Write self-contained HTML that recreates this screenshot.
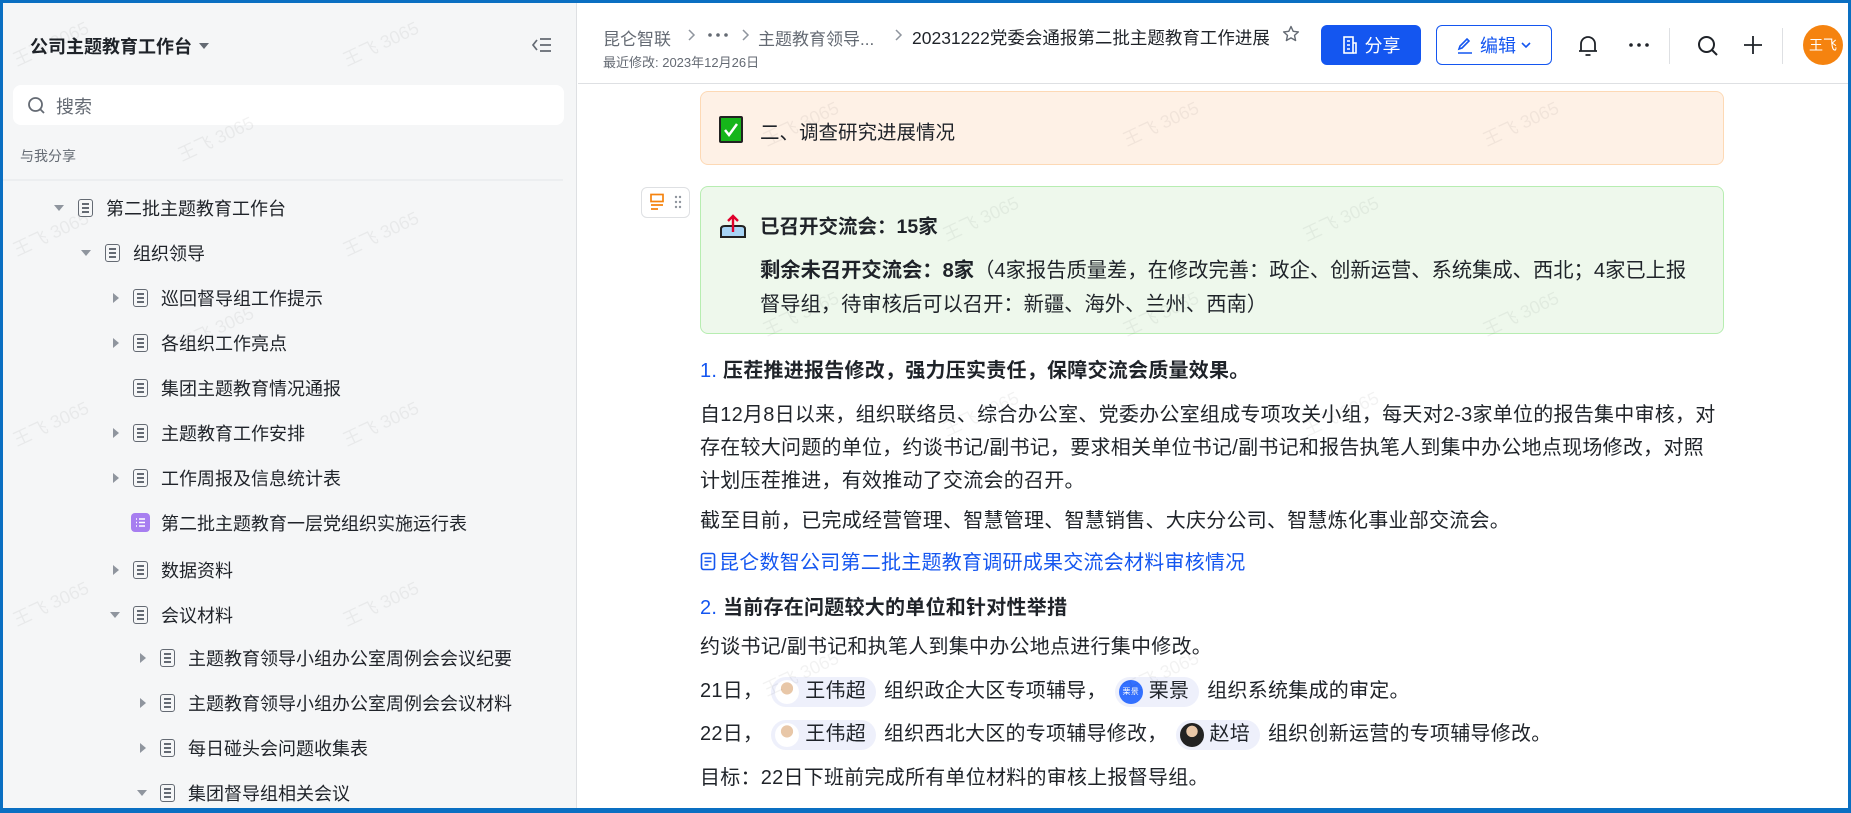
<!DOCTYPE html>
<html><head><meta charset="utf-8"><style>
*{margin:0;padding:0;box-sizing:border-box}
body{width:1851px;height:813px;overflow:hidden;background:#fff;font-family:"Liberation Sans","Noto Sans CJK SC",sans-serif;color:#1f2329;position:relative}
.frame{position:absolute;inset:0;border:3px solid #0a6fc2;border-bottom-width:5px;z-index:50;pointer-events:none}
.side{position:absolute;left:0;top:0;width:577px;height:813px;background:#f5f6f7;border-right:1px solid #dee0e3;overflow:hidden}
.abs{position:absolute;white-space:nowrap}
.ti{position:absolute;height:30px;display:flex;align-items:center;font-size:18px;color:#1f2329;white-space:nowrap}
.arr{position:absolute;width:0;height:0}
.down{border-left:5px solid transparent;border-right:5px solid transparent;border-top:6px solid #8f959e}
.right{border-top:5px solid transparent;border-bottom:5px solid transparent;border-left:6px solid #8f959e}
.doc{position:absolute;width:15px;height:18px;border:1.8px solid #646a73;border-radius:3px}
.doc:before{content:"";position:absolute;left:2.5px;top:3px;width:7px;height:1.6px;background:#646a73;box-shadow:0 4px 0 #646a73,0 8px 0 #646a73}
.p{position:absolute;left:700px;font-size:20px;white-space:nowrap;line-height:33px;letter-spacing:0.25px}
.men{display:inline-flex;align-items:center;background:#eef0fb;border-radius:16px;padding:0 10px 0 4px;height:30px;vertical-align:middle;margin:0 8px;color:#1f2329}
.av{width:24px;height:24px;border-radius:50%;margin-right:6px;display:inline-block}
.wm{position:absolute;color:rgba(0,0,0,0.05);font-size:18px;transform:rotate(-25deg);white-space:nowrap}
</style></head><body>
<div class="frame"></div>

<div class="side">
  <div class="abs" style="left:30px;top:33px;font-size:18px;font-weight:bold">公司主题教育工作台</div>
  <div class="arr down" style="left:199px;top:43px;border-top-color:#646a73"></div>
  <svg class="abs" style="left:531px;top:36px" width="22" height="18" viewBox="0 0 22 18"><path d="M6 4 L2 9 L6 14 M9 3 H20 M9 9 H20 M9 15 H20" stroke="#646a73" stroke-width="1.7" fill="none"/></svg>
  <div class="abs" style="left:13px;top:85px;width:551px;height:40px;background:#fff;border-radius:8px"></div>
  <svg class="abs" style="left:27px;top:96px" width="20" height="20" viewBox="0 0 20 20"><circle cx="8.5" cy="8.5" r="6.5" stroke="#646a73" stroke-width="1.8" fill="none"/><path d="M13.5 13.5 L17 17" stroke="#646a73" stroke-width="1.8"/></svg>
  <div class="abs" style="left:56px;top:93px;font-size:18px;color:#646a73">搜索</div>
  <div class="abs" style="left:20px;top:146px;font-size:14px;color:#646a73">与我分享</div>
  <div class="abs" style="left:3px;top:179px;width:560px;height:2px;background:#eceef0"></div>

  <div class="arr down" style="left:54px;top:205px"></div><div class="doc" style="left:78px;top:199px"></div><div class="ti" style="left:106px;top:193px">第二批主题教育工作台</div>
  <div class="arr down" style="left:81px;top:250px"></div><div class="doc" style="left:105px;top:244px"></div><div class="ti" style="left:133px;top:238px">组织领导</div>
  <div class="arr right" style="left:113px;top:293px"></div><div class="doc" style="left:133px;top:289px"></div><div class="ti" style="left:161px;top:283px">巡回督导组工作提示</div>
  <div class="arr right" style="left:113px;top:338px"></div><div class="doc" style="left:133px;top:334px"></div><div class="ti" style="left:161px;top:328px">各组织工作亮点</div>
  <div class="doc" style="left:133px;top:379px"></div><div class="ti" style="left:161px;top:373px">集团主题教育情况通报</div>
  <div class="arr right" style="left:113px;top:428px"></div><div class="doc" style="left:133px;top:424px"></div><div class="ti" style="left:161px;top:418px">主题教育工作安排</div>
  <div class="arr right" style="left:113px;top:473px"></div><div class="doc" style="left:133px;top:469px"></div><div class="ti" style="left:161px;top:463px">工作周报及信息统计表</div>
  <div class="abs" style="left:131px;top:513px;width:19px;height:19px;background:#a77ef0;border-radius:4px"><svg width="19" height="19" viewBox="0 0 19 19"><path d="M5 6h1M8 6h6M5 9.5h1M8 9.5h6M5 13h1M8 13h6" stroke="#fff" stroke-width="1.5"/></svg></div><div class="ti" style="left:161px;top:508px">第二批主题教育一层党组织实施运行表</div>
  <div class="arr right" style="left:113px;top:565px"></div><div class="doc" style="left:133px;top:561px"></div><div class="ti" style="left:161px;top:555px">数据资料</div>
  <div class="arr down" style="left:110px;top:612px"></div><div class="doc" style="left:133px;top:606px"></div><div class="ti" style="left:161px;top:600px">会议材料</div>
  <div class="arr right" style="left:140px;top:653px"></div><div class="doc" style="left:160px;top:649px"></div><div class="ti" style="left:188px;top:643px">主题教育领导小组办公室周例会会议纪要</div>
  <div class="arr right" style="left:140px;top:698px"></div><div class="doc" style="left:160px;top:694px"></div><div class="ti" style="left:188px;top:688px">主题教育领导小组办公室周例会会议材料</div>
  <div class="arr right" style="left:140px;top:743px"></div><div class="doc" style="left:160px;top:739px"></div><div class="ti" style="left:188px;top:733px">每日碰头会问题收集表</div>
  <div class="arr down" style="left:137px;top:790px"></div><div class="doc" style="left:160px;top:784px"></div><div class="ti" style="left:188px;top:778px">集团督导组相关会议</div>
  <div class="wm" style="left:10px;top:30px">王飞 3065</div><div class="wm" style="left:340px;top:30px">王飞 3065</div>
  <div class="wm" style="left:175px;top:125px">王飞 3065</div><div class="wm" style="left:10px;top:220px">王飞 3065</div>
  <div class="wm" style="left:340px;top:220px">王飞 3065</div><div class="wm" style="left:175px;top:315px">王飞 3065</div>
  <div class="wm" style="left:10px;top:410px">王飞 3065</div><div class="wm" style="left:340px;top:410px">王飞 3065</div>
  <div class="wm" style="left:10px;top:590px">王飞 3065</div><div class="wm" style="left:340px;top:590px">王飞 3065</div>
</div>

<!-- header -->
<div class="abs" style="left:603px;top:25px;font-size:17px;color:#646a73">昆仑智联</div>
<svg class="abs" style="left:686px;top:28px" width="10" height="14" viewBox="0 0 10 14"><path d="M3 2l5 5-5 5" stroke="#8f959e" stroke-width="1.5" fill="none"/></svg>
<svg class="abs" style="left:707px;top:32px" width="22" height="6" viewBox="0 0 22 6"><g fill="#646a73"><circle cx="3" cy="3" r="1.8"/><circle cx="11" cy="3" r="1.8"/><circle cx="19" cy="3" r="1.8"/></g></svg>
<svg class="abs" style="left:740px;top:28px" width="10" height="14" viewBox="0 0 10 14"><path d="M3 2l5 5-5 5" stroke="#8f959e" stroke-width="1.5" fill="none"/></svg>
<div class="abs" style="left:758px;top:25px;font-size:17px;color:#646a73">主题教育领导...</div>
<svg class="abs" style="left:893px;top:28px" width="10" height="14" viewBox="0 0 10 14"><path d="M3 2l5 5-5 5" stroke="#8f959e" stroke-width="1.5" fill="none"/></svg>
<div class="abs" style="left:912px;top:25px;font-size:17.5px;color:#1f2329">20231222党委会通报第二批主题教育工作进展</div>
<svg class="abs" style="left:1282px;top:25px" width="18" height="18" viewBox="0 0 18 18"><path d="M9 1.5l2.2 4.8 5.2.6-3.9 3.5 1.1 5.1L9 12.9l-4.6 2.6 1.1-5.1L1.6 6.9l5.2-.6z" stroke="#646a73" stroke-width="1.4" fill="none" stroke-linejoin="round"/></svg>
<div class="abs" style="left:603px;top:52px;font-size:13px;color:#646a73">最近修改: 2023年12月26日</div>
<div class="abs" style="left:1321px;top:25px;width:100px;height:40px;background:#1456f0;border-radius:6px;color:#fff;font-size:18px;display:flex;align-items:center;justify-content:center"><svg width="16" height="18" viewBox="0 0 16 18" style="margin-right:7px"><rect x="2" y="1" width="9" height="16" stroke="#fff" stroke-width="1.6" fill="none"/><path d="M11 7h3v10h-3M5 5h3M5 9h3M5 13h3" stroke="#fff" stroke-width="1.6" fill="none"/></svg>分享</div>
<div class="abs" style="left:1436px;top:25px;width:116px;height:40px;border:1.3px solid #1456f0;border-radius:6px;color:#1456f0;font-size:18px;display:flex;align-items:center;justify-content:center"><svg width="18" height="18" viewBox="0 0 18 18" style="margin-right:6px"><path d="M3 13l1-3 7-7 2 2-7 7z M2 17h14" stroke="#1456f0" stroke-width="1.6" fill="none"/></svg>编辑<svg width="12" height="10" viewBox="0 0 12 10" style="margin-left:4px"><path d="M2 3l4 4 4-4" stroke="#1456f0" stroke-width="1.6" fill="none"/></svg></div>
<svg class="abs" style="left:1577px;top:34px" width="22" height="24" viewBox="0 0 22 24"><path d="M4 17V10a7 7 0 0 1 14 0v7H4zM2 17h18M8.5 21h5" stroke="#1f2329" stroke-width="1.8" fill="none"/></svg>
<svg class="abs" style="left:1628px;top:42px" width="22" height="6" viewBox="0 0 22 6"><g fill="#1f2329"><circle cx="3" cy="3" r="1.8"/><circle cx="11" cy="3" r="1.8"/><circle cx="19" cy="3" r="1.8"/></g></svg>
<div class="abs" style="left:1669px;top:28px;width:1px;height:36px;background:#dee0e3"></div>
<svg class="abs" style="left:1696px;top:34px" width="24" height="24" viewBox="0 0 24 24"><circle cx="10.5" cy="10.5" r="7.5" stroke="#1f2329" stroke-width="2" fill="none"/><path d="M16 16l5 5" stroke="#1f2329" stroke-width="2"/></svg>
<svg class="abs" style="left:1743px;top:35px" width="20" height="20" viewBox="0 0 20 20"><path d="M10 1v18M1 10h18" stroke="#1f2329" stroke-width="1.8"/></svg>
<div class="abs" style="left:1782px;top:28px;width:1px;height:36px;background:#dee0e3"></div>
<div class="abs" style="left:1803px;top:25px;width:40px;height:40px;border-radius:50%;background:#f5830f;color:#fff;font-size:14px;display:flex;align-items:center;justify-content:center">王飞</div>
<div class="abs" style="left:578px;top:83px;width:1270px;height:1px;background:#dee0e3"></div>

<!-- content -->
<div class="abs" style="left:700px;top:91px;width:1024px;height:74px;background:#fef1e6;border:1.5px solid #fdd9b5;border-radius:8px"></div>
<div class="abs" style="left:719px;top:116px;width:24px;height:27px;background:#16b51a;border:2px solid #222;border-radius:2px"><svg width="20" height="23" viewBox="0 0 20 23"><path d="M4 12l4 5 8-11" stroke="#fff" stroke-width="2.5" fill="none"/></svg></div>
<div class="abs" style="left:760px;top:116px;font-size:19.5px">二、调查研究进展情况</div>

<div class="abs" style="left:641px;top:187px;width:49px;height:31px;border:1px solid #dee0e3;border-radius:6px;background:#fff"></div>
<svg class="abs" style="left:649px;top:193px" width="16" height="18" viewBox="0 0 16 18"><rect x="2" y="1.5" width="12" height="7" stroke="#f5830f" stroke-width="1.7" fill="none"/><path d="M2 12h12M2 16h7" stroke="#f5830f" stroke-width="1.7"/></svg>
<svg class="abs" style="left:674px;top:195px" width="8" height="16" viewBox="0 0 8 16"><g fill="#8f959e"><circle cx="2" cy="2" r="1.2"/><circle cx="6" cy="2" r="1.2"/><circle cx="2" cy="7" r="1.2"/><circle cx="6" cy="7" r="1.2"/><circle cx="2" cy="12" r="1.2"/><circle cx="6" cy="12" r="1.2"/></g></svg>
<div class="abs" style="left:700px;top:186px;width:1024px;height:148px;background:#eef8ec;border:1.5px solid #b7edb1;border-radius:8px"></div>
<svg class="abs" style="left:719px;top:212px" width="28" height="28" viewBox="0 0 28 28"><path d="M2 17 Q2 14 6 14 H22 Q26 14 26 17 V25 H2z" fill="#a8d4f5" stroke="#222" stroke-width="2"/><path d="M14 20V4M9 9l5-5 5 5" stroke="#e0002b" stroke-width="2.4" fill="none"/></svg>
<div class="abs" style="left:760px;top:210px;font-size:19.5px;font-weight:bold">已召开交流会：15家</div>
<div class="abs" style="left:760px;top:253px;font-size:20.3px"><b>剩余未召开交流会：8家</b>（4家报告质量差，在修改完善：政企、创新运营、系统集成、西北；4家已上报</div>
<div class="abs" style="left:760px;top:287px;font-size:20.3px">督导组，待审核后可以召开：新疆、海外、兰州、西南）</div>

<div class="p" style="top:355px;font-weight:bold"><span style="color:#1456f0;font-weight:normal">1.</span> 压茬推进报告修改，强力压实责任，保障交流会质量效果。</div>
<div class="p" style="top:399px">自12月8日以来，组织联络员、综合办公室、党委办公室组成专项攻关小组，每天对2-3家单位的报告集中审核，对</div>
<div class="p" style="top:432px">存在较大问题的单位，约谈书记/副书记，要求相关单位书记/副书记和报告执笔人到集中办公地点现场修改，对照</div>
<div class="p" style="top:465px">计划压茬推进，有效推动了交流会的召开。</div>
<div class="p" style="top:505px">截至目前，已完成经营管理、智慧管理、智慧销售、大庆分公司、智慧炼化事业部交流会。</div>
<div class="p" style="top:547px;color:#1456f0"><svg width="17" height="19" viewBox="0 0 17 19" style="vertical-align:-2px;margin-right:2px"><rect x="1.5" y="1.5" width="13" height="16" rx="2" stroke="#1456f0" stroke-width="1.6" fill="none"/><path d="M4.5 6h7M4.5 9.5h7M4.5 13h4" stroke="#1456f0" stroke-width="1.5"/></svg>昆仑数智公司第二批主题教育调研成果交流会材料审核情况</div>
<div class="p" style="top:592px;font-weight:bold"><span style="color:#1456f0;font-weight:normal">2.</span> 当前存在问题较大的单位和针对性举措</div>
<div class="p" style="top:631px">约谈书记/副书记和执笔人到集中办公地点进行集中修改。</div>
<div class="p" style="top:675px">21日，<span class="men"><span class="av" style="background:radial-gradient(circle at 50% 35%,#e8c7a8 30%,#fff 32%)"></span>王伟超</span>组织政企大区专项辅导，<span class="men"><span class="av" style="background:#3370ff;color:#fff;font-size:8px;text-align:center;line-height:24px">栗景</span>栗景</span>组织系统集成的审定。</div>
<div class="p" style="top:718px">22日，<span class="men"><span class="av" style="background:radial-gradient(circle at 50% 35%,#e8c7a8 30%,#fff 32%)"></span>王伟超</span>组织西北大区的专项辅导修改，<span class="men"><span class="av" style="background:radial-gradient(circle at 50% 35%,#e8c7a8 28%,#222 30%)"></span>赵培</span>组织创新运营的专项辅导修改。</div>
<div class="p" style="top:762px">目标：22日下班前完成所有单位材料的审核上报督导组。</div>
<div class="wm" style="left:760px;top:110px">王飞 3065</div><div class="wm" style="left:1120px;top:110px">王飞 3065</div><div class="wm" style="left:1480px;top:110px">王飞 3065</div>
<div class="wm" style="left:940px;top:205px">王飞 3065</div><div class="wm" style="left:1300px;top:205px">王飞 3065</div>
<div class="wm" style="left:760px;top:300px">王飞 3065</div><div class="wm" style="left:1120px;top:300px">王飞 3065</div><div class="wm" style="left:1480px;top:300px">王飞 3065</div>
<div class="wm" style="left:940px;top:400px">王飞 3065</div><div class="wm" style="left:1300px;top:400px">王飞 3065</div>
<div class="wm" style="left:760px;top:660px">王飞 3065</div><div class="wm" style="left:1120px;top:660px">王飞 3065</div>
</body></html>
